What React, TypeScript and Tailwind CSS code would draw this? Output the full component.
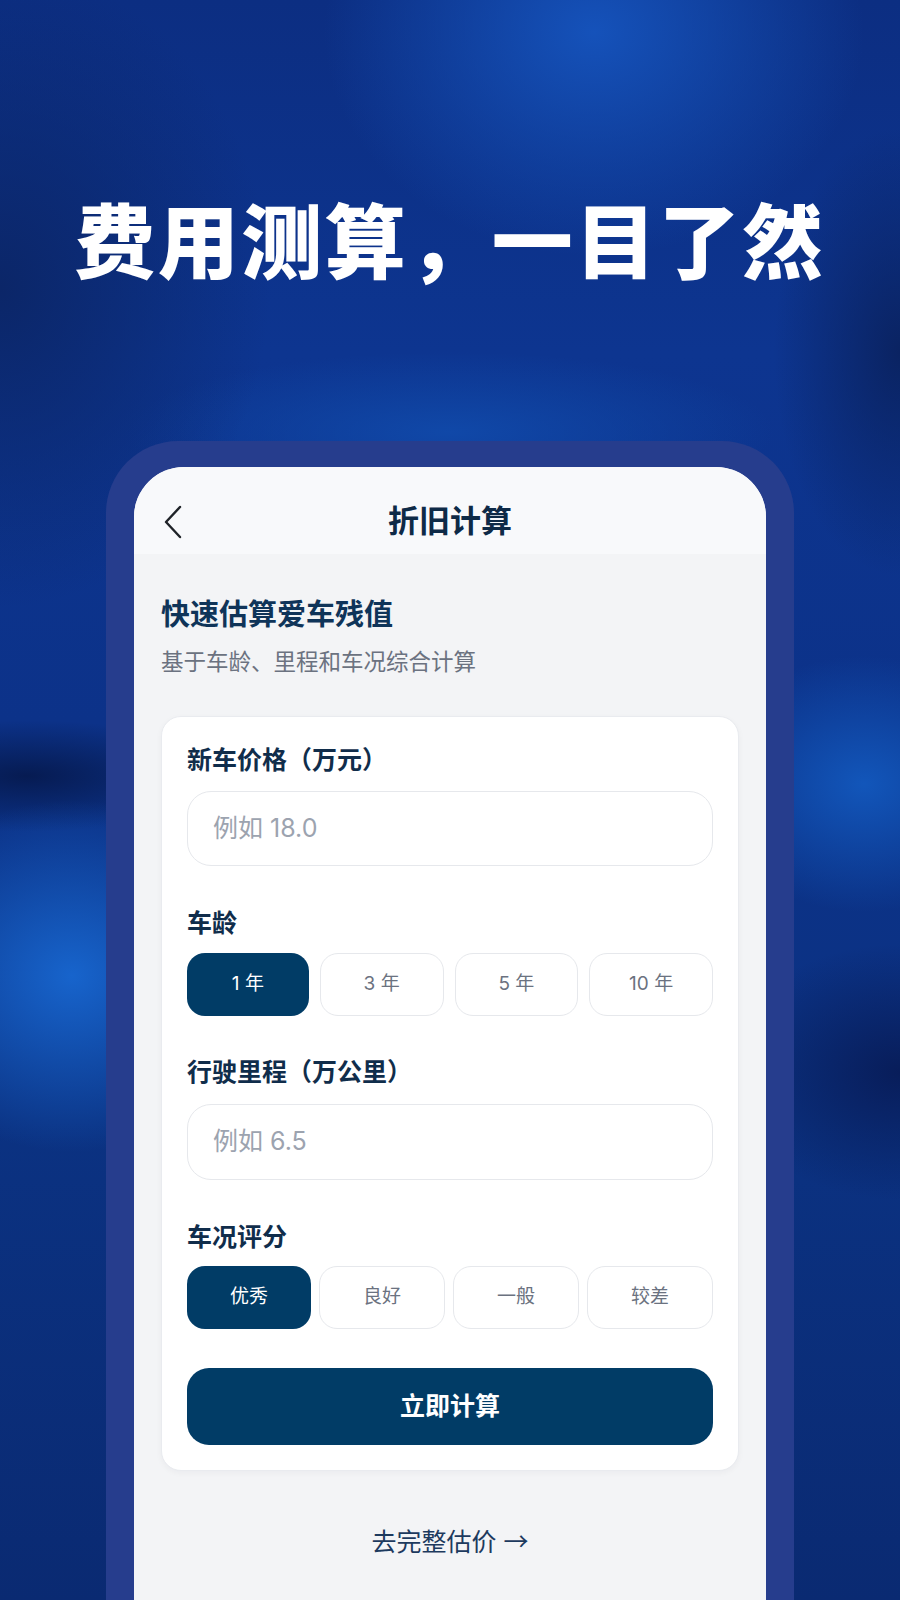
import React from "react";

const font = "font-['Inter','Noto_Sans_CJK_SC',sans-serif]";

function OptionRow({ items, gap }: { items: string[]; gap: string }) {
  return (
    <div className={`flex ${gap}`}>
      {items.map((t, i) => (
        <div
          key={t}
          className={
            i === 0
              ? "flex h-[63px] flex-1 items-center justify-center rounded-[18px] bg-[#013c66] text-[19px] text-white"
              : "flex h-[63px] flex-1 items-center justify-center rounded-[18px] border-[1.5px] border-[#e6e8ec] bg-white text-[19px] text-[#6b7280]"
          }
        >
          {t}
        </div>
      ))}
    </div>
  );
}

export default function App() {
  return (
    <div
      className={`relative h-[1600px] w-[900px] overflow-hidden ${font} bg-[radial-gradient(ellipse_30%_14%_at_66%_2%,#1552ba_0%,transparent_100%),radial-gradient(ellipse_22%_11%_at_8%_61%,#1764cc_0%,transparent_100%),radial-gradient(ellipse_18%_8%_at_96%_49%,#1256ba_0%,transparent_100%),radial-gradient(ellipse_22%_3.5%_at_3%_48.5%,#061b52_0%,transparent_100%),radial-gradient(ellipse_20%_8%_at_100%_67%,#081d5a_0%,transparent_100%),radial-gradient(ellipse_30%_20%_at_0%_18%,#0b2668_0%,transparent_100%),radial-gradient(ellipse_14%_14%_at_100%_22%,#0a2362_0%,transparent_100%),radial-gradient(ellipse_36%_5%_at_50%_27%,#1048a8_0%,transparent_100%),linear-gradient(180deg,#0c2e82_0%,#0d3590_22%,#0c3289_45%,#0b3282_70%,#0a2a72_100%)]`}
    >
      <div className="pt-[196px] text-center text-[81px] font-black leading-none tracking-[2.5px] text-white font-['Noto_Sans_CJK_SC',sans-serif]">
        费用测算，一目了然
      </div>

      <div className="ml-[106px] mt-[164px] w-[688px] rounded-t-[72px] bg-[#263d8d] px-[28px] pt-[26px]">
        <div className="h-[1200px] overflow-hidden rounded-t-[50px] bg-[#f3f4f6]">
          {/* header */}
          <div className="relative flex h-[87px] items-center justify-center bg-[#f8f9fb] pt-[22px]">
            <svg
              className="absolute left-[29px] top-[38px]"
              width="20"
              height="34"
              viewBox="0 0 20 34"
              fill="none"
            >
              <path d="M17 2 L3 17 L17 32" stroke="#1f2328" strokeWidth="2.4" strokeLinecap="round" strokeLinejoin="round" />
            </svg>
            <div className="text-[31px] font-bold text-[#0e2a47]">折旧计算</div>
          </div>

          {/* body */}
          <div className="px-[27px] pt-[43px]">
            <div className="text-[29px] font-bold leading-[36px] text-[#0f3459]">快速估算爱车残值</div>
            <div className="mt-[14px] text-[22.5px] leading-[30px] text-[#6b7280]">基于车龄、里程和车况综合计算</div>

            <div className="mt-[39px] rounded-[20px] border border-[#e9ebef] bg-white px-[25px] pb-[25px] pt-[27px] shadow-[0_2px_6px_rgba(15,23,42,0.04)]">
              <div className="text-[25px] font-semibold leading-[32px] text-[#102d4b]">新车价格（万元）</div>
              <div className="mt-[15px] flex h-[75px] items-center rounded-[24px] border-[1.5px] border-[#e6e8ec] bg-white px-[25px] text-[25px] text-[#9ca3af]">
                例如 18.0
              </div>

              <div className="mt-[41px] text-[25px] font-semibold leading-[32px] text-[#102d4b]">车龄</div>
              <div className="mt-[14px]">
                <OptionRow items={["1 年", "3 年", "5 年", "10 年"]} gap="gap-[11px]" />
              </div>

              <div className="mt-[40px] text-[25px] font-semibold leading-[32px] text-[#102d4b]">行驶里程（万公里）</div>
              <div className="mt-[16px] flex h-[76px] items-center rounded-[24px] border-[1.5px] border-[#e6e8ec] bg-white px-[25px] text-[25px] text-[#9ca3af]">
                例如 6.5
              </div>

              <div className="mt-[41px] text-[25px] font-semibold leading-[32px] text-[#102d4b]">车况评分</div>
              <div className="mt-[13px]">
                <OptionRow items={["优秀", "良好", "一般", "较差"]} gap="gap-[8px]" />
              </div>

              <div className="mt-[39px] flex h-[77px] items-center justify-center rounded-[22px] bg-[#013c66] text-[25px] font-semibold text-white">
                立即计算
              </div>
            </div>

            <div className="mt-[53px] text-center text-[25px] leading-[32px] text-[#1d3a5e]">
              去完整估价 <span className="font-['Noto_Sans_CJK_SC',sans-serif]">→</span>
            </div>
          </div>
        </div>
      </div>
    </div>
  );
}
